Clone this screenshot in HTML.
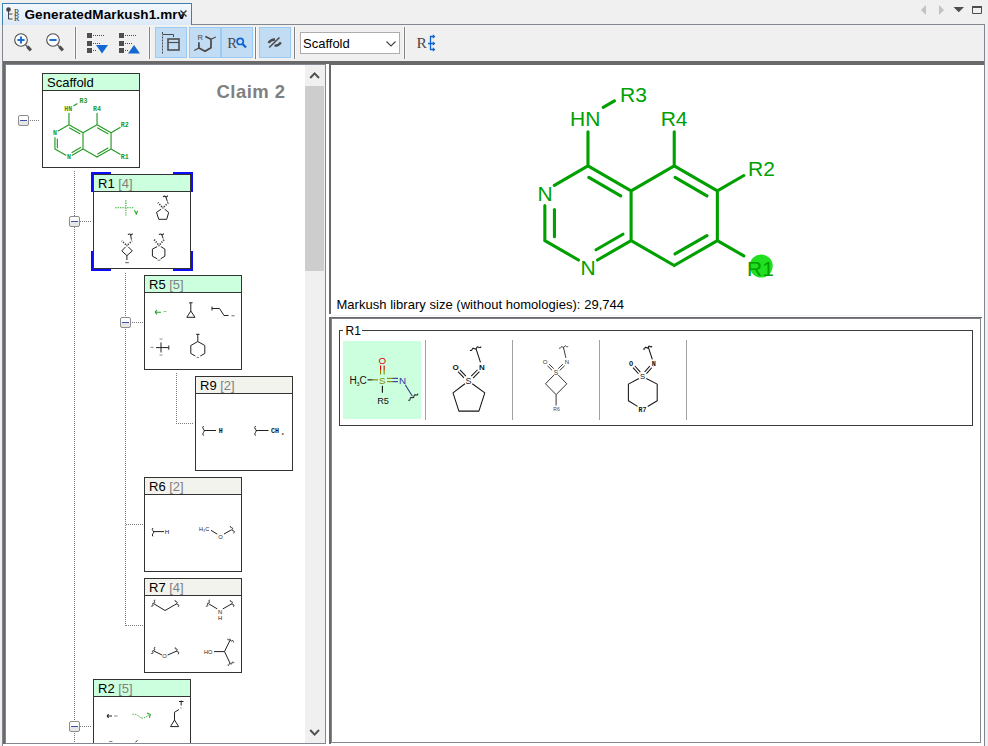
<!DOCTYPE html>
<html><head><meta charset="utf-8"><title>GeneratedMarkush1.mrv</title>
<style>
html,body{margin:0;padding:0}
body{width:988px;height:746px;background:#f0f0f0;position:relative;overflow:hidden;font-family:"Liberation Sans",sans-serif;font-size:13px;color:#000}
div,svg,span{box-sizing:border-box}
.abs{position:absolute}
.cell{position:absolute;width:98px;height:95px;border:1px solid #333;background:#fff}
.cell .hd{position:absolute;left:0;top:0;width:96px;height:17px;border-bottom:1px solid #333;padding-left:4px;line-height:17px;font-size:13px;white-space:nowrap;overflow:hidden}
.cell .hd i{font-style:normal;color:#808080}
.g{background:#ccffdd}.y{background:#f3f3ed}
.exp{position:absolute;width:11px;height:11px;border:1px solid #8c8c8c;border-radius:2px;background:linear-gradient(#fff 0%,#fbfbfb 55%,#e4e4e4 62%,#e8e8e8 100%)}
.exp b{position:absolute;left:1px;top:4px;width:7px;height:1px;background:#3c50a5}
.vd{position:absolute;width:1px;background:repeating-linear-gradient(to bottom,#7a7a7a 0 1px,transparent 1px 2px)}
.hdot{position:absolute;height:1px;background:repeating-linear-gradient(to right,#7a7a7a 0 1px,transparent 1px 2px)}
.tb{position:absolute;top:27px;width:32px;height:31px;background:#c2dcf3;border:1px solid #9acbf6}
.sep{position:absolute;top:27px;width:1px;height:32px;background:#808080;box-shadow:1px 0 #fafafa,-1px 0 #f8f8f8}
svg{position:absolute;left:0;top:0;overflow:visible}
</style></head><body>
<div style="position:absolute;left:2px;top:24px;width:983px;height:1px;background:#828790;"></div><div style="position:absolute;left:2px;top:24px;width:1px;height:722px;background:#828790;"></div><div style="position:absolute;left:984px;top:24px;width:1px;height:722px;background:#828790;"></div><div style="position:absolute;left:3px;top:61px;width:981px;height:685px;background:#fff;"></div><div style="position:absolute;left:3px;top:61px;width:981px;height:3px;background:#696969;"></div><div style="position:absolute;left:3px;top:61px;width:2px;height:683px;background:#696969;"></div><div class="abs" style="left:2px;top:3px;width:190px;height:22px;border:1px solid #3c7fb1;border-bottom:none;background:linear-gradient(#f4f8fd,#dce9f8)"></div><div class="abs" style="left:24.5px;top:6px;width:159px;height:18px;overflow:hidden;white-space:nowrap;font-weight:bold;font-size:13.5px;line-height:18px;letter-spacing:0.12px">GeneratedMarkush1.mrv</div><div class="abs" style="left:5px;top:64px;width:321px;height:680px;border:1px solid #828790;background:#fff"></div><div style="position:absolute;left:305px;top:65px;width:20px;height:678px;background:#f0f0f0;"></div><div style="position:absolute;left:305px;top:86px;width:19px;height:185px;background:#cdcdcd;"></div><div style="position:absolute;left:329px;top:64px;width:2px;height:680px;background:#696969;"></div><div style="position:absolute;left:331px;top:64px;width:653px;height:1px;background:#696969;"></div><div style="position:absolute;left:329px;top:314px;width:655px;height:3px;background:#fff;"></div><div style="position:absolute;left:331px;top:315px;width:650px;height:1px;background:#f3f3f3;"></div><div style="position:absolute;left:329px;top:317px;width:653px;height:1px;background:#696969;"></div><div class="abs" style="left:331px;top:318px;width:650px;height:425px;border:1px solid #828790;border-top:none;background:#fff"></div><div style="position:absolute;left:331px;top:318px;width:650px;height:1px;background:#7b7e85;"></div><div class="tb" style="left:155px"></div><div class="tb" style="left:189px"></div><div class="tb" style="left:221px"></div><div class="tb" style="left:259px"></div><div class="sep" style="left:75px"></div><div class="sep" style="left:149px"></div><div class="sep" style="left:255px"></div><div class="sep" style="left:294px"></div><div class="sep" style="left:404px"></div><div class="abs" style="left:300px;top:32px;width:100px;height:22px;border:1px solid #adadad;background:#fff;padding-left:2px;line-height:22px;font-size:13px">Scaffold</div><div class="abs" style="left:216.6px;top:81px;font-weight:bold;font-size:18.5px;line-height:22px;color:#808080;letter-spacing:0.42px;white-space:nowrap">Claim 2</div><div class="abs" style="left:6px;top:65px;width:299px;height:678px;overflow:hidden"><div class="abs" style="left:-6px;top:-65px;width:988px;height:900px"><div class="vd" style="left:74px;top:171px;height:576px"></div><div class="vd" style="left:125px;top:273px;height:353px"></div><div class="vd" style="left:176px;top:373px;height:51px"></div><div class="hdot" style="left:30px;top:120px;width:9px"></div><div class="hdot" style="left:80px;top:221px;width:11px"></div><div class="hdot" style="left:132px;top:322px;width:11px"></div><div class="hdot" style="left:176px;top:423px;width:17px"></div><div class="hdot" style="left:126px;top:524px;width:17px"></div><div class="hdot" style="left:126px;top:625px;width:17px"></div><div class="hdot" style="left:80px;top:726px;width:11px"></div><div class="exp" style="left:18px;top:115px"><b></b></div><div class="exp" style="left:69px;top:216px"><b></b></div><div class="exp" style="left:120px;top:317px"><b></b></div><div class="exp" style="left:69px;top:721px"><b></b></div><div class="cell" style="left:42px;top:73px"><div class="hd g">Scaffold</div></div><div class="cell" style="left:93px;top:174px"><div class="hd g">R1 <i>[4]</i></div></div><div class="cell" style="left:144px;top:275px"><div class="hd g">R5 <i>[5]</i></div></div><div class="cell" style="left:195px;top:376px"><div class="hd y">R9 <i>[2]</i></div></div><div class="cell" style="left:144px;top:477px"><div class="hd y">R6 <i>[2]</i></div></div><div class="cell" style="left:144px;top:578px"><div class="hd y">R7 <i>[4]</i></div></div><div class="cell" style="left:93px;top:679px"><div class="hd g">R2 <i>[5]</i></div></div><div style="position:absolute;left:91px;top:172px;width:20px;height:2px;background:#0c0cf6;"></div><div style="position:absolute;left:91px;top:172px;width:2px;height:20px;background:#0c0cf6;"></div><div style="position:absolute;left:173px;top:172px;width:20px;height:2px;background:#0c0cf6;"></div><div style="position:absolute;left:191px;top:172px;width:2px;height:20px;background:#0c0cf6;"></div><div style="position:absolute;left:91px;top:269px;width:20px;height:2px;background:#0c0cf6;"></div><div style="position:absolute;left:91px;top:251px;width:2px;height:20px;background:#0c0cf6;"></div><div style="position:absolute;left:173px;top:269px;width:20px;height:2px;background:#0c0cf6;"></div><div style="position:absolute;left:191px;top:251px;width:2px;height:20px;background:#0c0cf6;"></div><svg width="988" height="900" viewBox="0 0 988 900"><path d="M83 132.8L83 149M83 132.8L68.97 124.7M79.89 133.78L69.68 127.88M68.97 124.7L58.06 131M54.94 137.66L54.94 149M57.34 138.98L57.34 147.68M54.94 149L65.85 155.3M72.09 155.3L83 149M72.03 152.56L80.66 147.58M83 132.8L97.03 124.7M97.03 124.7L111.06 132.8M97.73 127.88L107.95 133.78M111.06 132.8L111.06 149M111.06 149L97.03 157.1M107.95 148.02L97.73 153.92M97.03 157.1L83 149M68.97 124.7L68.97 113.36M97.03 124.7L97.03 113.36M111.06 132.8L120.1 127.58M111.06 149L120.1 154.22M73.8 105.71L77.08 103.82" stroke="#239a23" stroke-width="1.15" fill="none" stroke-linecap="round"/><g font-family="'Liberation Mono',monospace" font-size="6.6" font-weight="bold" fill="#239a23"><text x="54.94" y="135.18" text-anchor="middle">N</text><text x="68.97" y="159.48" text-anchor="middle">N</text><text x="68.27" y="110.88" text-anchor="middle">HN</text><text x="97.03" y="110.88" text-anchor="middle">R4</text><text x="83.5" y="102.78" text-anchor="middle">R3</text><text x="124.69" y="127.08" text-anchor="middle">R2</text><text x="124.69" y="159.48" text-anchor="middle">R1</text></g><path d="M115.2 207.8h19M125.9 200.2v15.2" stroke="#22aa22" stroke-width="1.1" fill="none" stroke-dasharray="1.3 1.1"/><path d="M134.3 210.3l2 3.4M137.6 210.8l-1.6 4" stroke="#22aa22" stroke-width="1.1" fill="none" /><path d="M161.93 206.79L157.88 202.57M163.91 206.83L168.33 202.58" stroke="#3a3a3a" stroke-width="1.7" fill="none" stroke-dasharray="1.2 1.3"/><path d="M167.38 201.49L165.7 196.6" stroke="#222" stroke-width="1" fill="none" /><path d="M163.1 196.8q1.5 -1.2 2.6 -0.2t2 -1" stroke="#222" stroke-width="1.1" fill="none" /><path d="M164.7 209.2L168.7 212.4L166.7 219.3L158.8 219.3L156.5 212.4L161.1 209.2" stroke="#222" stroke-width="1" fill="none" stroke-linejoin="round"/><circle cx="162.9" cy="207.8" r="0.9" fill="#777"/><path d="M125.86 244.57L121.65 240.8M127.94 244.57L132.15 240.8" stroke="#3a3a3a" stroke-width="1.7" fill="none" stroke-dasharray="1.2 1.3"/><path d="M131.42 239.62L130.5 234.4" stroke="#222" stroke-width="1" fill="none" /><path d="M127.9 234.6q1.5 -1.2 2.6 -0.2t2 -1" stroke="#222" stroke-width="1.1" fill="none" /><path d="M128.3 246.9L132.3 250.9L126.9 255.7L121.8 250.9L125.5 246.9" stroke="#222" stroke-width="1" fill="none" stroke-linejoin="round"/><circle cx="126.9" cy="245.5" r="0.9" fill="#777"/><path d="M126.9 255.7v4.3" stroke="#222" stroke-width="1" fill="none" /><path d="M125.2 262.6h3.6" stroke="#777" stroke-width="1.2" fill="none" /><path d="M158.1 244.43L154.02 239.54M159.92 244.45L164.19 239.55" stroke="#3a3a3a" stroke-width="1.7" fill="none" stroke-dasharray="1.2 1.3"/><path d="M163.21 238.51L161.6 234.4" stroke="#222" stroke-width="1" fill="none" /><path d="M159 234.6q1.5 -1.2 2.6 -0.2t2 -1" stroke="#222" stroke-width="1.1" fill="none" /><path d="M160.8 246.6L164.9 249.1L164.9 256.2L160.6 258.8" stroke="#222" stroke-width="1" fill="none" stroke-linejoin="round"/><circle cx="159" cy="245.5" r="0.9" fill="#777"/><path d="M157.2 246.6L152.4 249.1V256.2L157.2 258.8" stroke="#222" stroke-width="1" fill="none" stroke-linejoin="round"/><path d="M157.6 260.2h2.8" stroke="#888" stroke-width="1.2" fill="none" /><path d="M155 312.2h6M155 312.2l2-2.2M155 312.2l2 2.2" stroke="#27a027" stroke-width="1.1" fill="none" /><path d="M163.5 311.5h3" stroke="#8c8" stroke-width="1" fill="none" /><path d="M190.8 303v8M190.8 311l-4 6.3h8.2zM189 302.8h3.6" stroke="#222" stroke-width="1" fill="none" stroke-linejoin="round"/><path d="M212 306.5v4M212 308.5h7.5l4.5 7h4.5" stroke="#222" stroke-width="1" fill="none" stroke-linejoin="round"/><path d="M231.5 315.8h3" stroke="#666" stroke-width="1" fill="none" /><path d="M156 347.6h12.5M161 342.5v10M168.8 345.5v4.2" stroke="#222" stroke-width="1" fill="none" /><path d="M150.5 347.3h3M159.5 339h3M159.5 355h3" stroke="#888" stroke-width="1" fill="none" /><path d="M197.8 334.5v7M196 334.3h3.6M197.8 341.5l7 4v8l-4.5 2.5M197.8 341.5l-7 4v8l4.5 2.5" stroke="#222" stroke-width="1" fill="none" stroke-linejoin="round"/><path d="M196.8 357.5h2.2" stroke="#777" stroke-width="1" fill="none" /><path d="M203.5 426q-1.6 1.6 0 3.2t0 3.2 0 3.2M204 430.5h12" stroke="#222" stroke-width="1" fill="none" /><text x="220.7" y="433.3" font-family="'Liberation Mono',monospace" font-size="6.6" font-weight="bold" fill="#111" text-anchor="middle">H</text><path d="M255.5 426q-1.6 1.6 0 3.2t0 3.2 0 3.2M256 430.5h12.5" stroke="#222" stroke-width="1" fill="none" /><text x="271" y="433.3" font-family="'Liberation Mono',monospace" font-size="6.6" font-weight="bold" fill="#111" text-anchor="start">CH</text><text x="281.5" y="434.5" font-family="'Liberation Mono',monospace" font-size="3.6" font-weight="bold" fill="#111" text-anchor="start">3</text><path d="M153 528q-1.6 1.4 0 2.8t0 2.8 0 2.8M153.5 531.6h10.5" stroke="#222" stroke-width="1" fill="none" /><text x="167" y="534.3" font-family="'Liberation Sans',sans-serif" font-size="6.2" font-weight="normal" fill="#222" text-anchor="middle">H</text><text x="199" y="531.3" font-family="'Liberation Sans',sans-serif" font-size="5.6" font-weight="normal" fill="#222" text-anchor="start">H</text><text x="203.3" y="532.3" font-family="'Liberation Sans',sans-serif" font-size="3" font-weight="normal" fill="#222" text-anchor="start">3</text><text x="205.2" y="531.3" font-family="'Liberation Sans',sans-serif" font-size="5.6" font-weight="normal" fill="#222" text-anchor="start">C</text><path d="M211 530.3l6.3 3.9M224 534l7.5-4.2" stroke="#222" stroke-width="1" fill="none" /><text x="220.5" y="539" font-family="'Liberation Sans',sans-serif" font-size="5.8" font-weight="normal" fill="#222" text-anchor="middle">O</text><path d="M230.62 525.97L230.44 526.44L230.37 526.86L230.48 527.18L230.79 527.39L231.24 527.52L231.75 527.63L232.2 527.77L232.49 528L232.58 528.32L232.5 528.75L232.31 529.22L232.14 529.69L232.08 530.1L232.21 530.41L232.53 530.62L233 530.75L233.5 530.85L233.94 531L234.21 531.23L234.29 531.57L234.19 532L234 532.48L233.83 532.94L233.79 533.34" stroke="#222" stroke-width="1" fill="none" /><path d="M153.8 603.7L165 610.5M176.8 603.7L165 610.5" stroke="#222" stroke-width="1" fill="none" /><path d="M155.26 600.09L154.78 600.19L154.4 600.34L154.21 600.59L154.21 600.95L154.37 601.38L154.57 601.85L154.71 602.28L154.7 602.62L154.49 602.87L154.1 603.01L153.61 603.11L153.14 603.21L152.78 603.37L152.6 603.63L152.62 604L152.78 604.44L152.99 604.9L153.12 605.32L153.09 605.66L152.86 605.89L152.46 606.03L151.97 606.12L151.5 606.23L151.15 606.4M175.34 600.09L175.15 600.54L175.07 600.94L175.17 601.24L175.47 601.44L175.91 601.55L176.41 601.64L176.85 601.77L177.13 601.97L177.21 602.28L177.12 602.68L176.92 603.14L176.74 603.59L176.67 603.98L176.79 604.27L177.1 604.46L177.56 604.57L178.06 604.66L178.48 604.79L178.74 605L178.81 605.32L178.7 605.73L178.5 606.19L178.32 606.64L178.27 607.02" stroke="#222" stroke-width="1" fill="none" /><path d="M208.5 603.7L217.25 608.87M232 603.7L222.78 608.92" stroke="#222" stroke-width="1" fill="none" /><path d="M209.96 600.09L209.48 600.19L209.1 600.34L208.91 600.59L208.91 600.95L209.07 601.38L209.27 601.85L209.41 602.28L209.4 602.62L209.19 602.87L208.8 603.01L208.31 603.11L207.84 603.21L207.48 603.37L207.3 603.63L207.32 604L207.48 604.44L207.69 604.9L207.82 605.32L207.79 605.66L207.56 605.89L207.16 606.03L206.67 606.12L206.2 606.23L205.85 606.4M230.54 600.09L230.35 600.54L230.27 600.94L230.37 601.24L230.67 601.44L231.11 601.55L231.61 601.64L232.05 601.77L232.33 601.97L232.41 602.28L232.32 602.68L232.12 603.14L231.94 603.59L231.87 603.98L231.99 604.27L232.3 604.46L232.76 604.57L233.26 604.66L233.68 604.79L233.94 605L234.01 605.32L233.9 605.73L233.7 606.19L233.52 606.64L233.47 607.02" stroke="#222" stroke-width="1" fill="none" /><text x="220" y="613.8" font-family="'Liberation Sans',sans-serif" font-size="5.8" font-weight="normal" fill="#222" text-anchor="middle">N</text><text x="220" y="619.5" font-family="'Liberation Sans',sans-serif" font-size="5.8" font-weight="normal" fill="#222" text-anchor="middle">H</text><path d="M153.8 651L161.92 654.91M176.8 651L167.73 655.01" stroke="#222" stroke-width="1" fill="none" /><path d="M155.26 647.39L154.78 647.49L154.4 647.64L154.21 647.89L154.21 648.25L154.37 648.68L154.57 649.15L154.71 649.58L154.7 649.92L154.49 650.17L154.1 650.31L153.61 650.41L153.14 650.51L152.78 650.67L152.6 650.93L152.62 651.3L152.78 651.74L152.99 652.2L153.12 652.62L153.09 652.96L152.86 653.19L152.46 653.33L151.97 653.42L151.5 653.53L151.15 653.7M175.34 647.39L175.15 647.84L175.07 648.24L175.17 648.54L175.47 648.74L175.91 648.85L176.41 648.94L176.85 649.07L177.13 649.27L177.21 649.58L177.12 649.98L176.92 650.44L176.74 650.89L176.67 651.28L176.79 651.57L177.1 651.76L177.56 651.87L178.06 651.96L178.48 652.09L178.74 652.3L178.81 652.62L178.7 653.03L178.5 653.49L178.32 653.94L178.27 654.32" stroke="#222" stroke-width="1" fill="none" /><text x="164.6" y="658.3" font-family="'Liberation Sans',sans-serif" font-size="5.8" font-weight="normal" fill="#222" text-anchor="middle">O</text><text x="204" y="653.8" font-family="'Liberation Sans',sans-serif" font-size="5.6" font-weight="normal" fill="#222" text-anchor="start">HO</text><path d="M214 651.6h10.5l5.6-11.5M224.5 651.6l5.6 11.7" stroke="#222" stroke-width="1" fill="none" stroke-linejoin="round"/><path d="M227.63 638.82L227.73 639.29L227.89 639.65L228.13 639.82L228.47 639.79L228.87 639.6L229.31 639.36L229.71 639.19L230.04 639.18L230.27 639.36L230.42 639.74L230.52 640.21L230.63 640.67L230.79 641.02L231.04 641.17L231.38 641.12L231.8 640.92L232.23 640.69L232.63 640.53L232.95 640.53L233.17 640.74L233.31 641.12L233.41 641.6L233.52 642.06L233.69 642.38M227.63 665.08L228.05 665.3L228.43 665.41L228.71 665.34L228.91 665.06L229.03 664.63L229.12 664.14L229.25 663.72L229.45 663.46L229.74 663.4L230.12 663.53L230.55 663.76L230.97 663.97L231.34 664.07L231.62 663.97L231.8 663.68L231.92 663.24L232.02 662.76L232.15 662.35L232.35 662.1L232.66 662.06L233.04 662.2L233.47 662.43L233.89 662.64L234.25 662.72" stroke="#222" stroke-width="1" fill="none" /><path d="M107 716h5M107 716l1.6-1.8M107 716l1.6 1.8" stroke="#222" stroke-width="1.1" fill="none" /><path d="M114 716h3.5" stroke="#888" stroke-width="1" fill="none" /><path d="M132.5 714.2q4 0 6.5 2.2t5 1.6l5-3" stroke="#27a027" stroke-width="1" fill="none" stroke-dasharray="1.3 1.2"/><path d="M147 713l3.3 1.6-1 3.3" stroke="#27a027" stroke-width="1.1" fill="none" /><path d="M181.2 700.5v5M179 701.5h4.5M179 709.5l-4.5 2.8v8M174.5 720l-4 6.6h8.2z" stroke="#222" stroke-width="1" fill="none" stroke-linejoin="round"/><path d="M180.3 708h1.4" stroke="#888" stroke-width="1.2" fill="none" /><path d="M109 741.5h3.5" stroke="#888" stroke-width="1" fill="none" /><path d="M135.5 742l2-1.6" stroke="#222" stroke-width="1" fill="none" /></svg></div></div><div class="abs" style="left:336.5px;top:297px;font-size:13px;letter-spacing:0.03px;line-height:15px;white-space:nowrap">Markush library size (without homologies): 29,744</div><div class="abs" style="left:339px;top:330px;width:634px;height:96px;border:1px solid #3c3c3c"></div><div class="abs" style="left:343px;top:323px;width:19px;height:16px;background:#fff;padding-left:2.5px;line-height:16px;font-size:12px">R1</div><div style="position:absolute;left:343px;top:341px;width:78px;height:78px;background:#ccffdd;"></div><div style="position:absolute;left:425px;top:340px;width:1px;height:80px;background:#a0a0a0;"></div><div style="position:absolute;left:512px;top:340px;width:1px;height:80px;background:#a0a0a0;"></div><div style="position:absolute;left:599px;top:340px;width:1px;height:80px;background:#a0a0a0;"></div><div style="position:absolute;left:686px;top:340px;width:1px;height:80px;background:#a0a0a0;"></div><svg width="988" height="746" viewBox="0 0 988 746"><path d="M926 5v10l-5-5z" fill="#c2c2c2"/><path d="M939 5v10l5-5z" fill="#c2c2c2"/><path d="M953.5 7h10.5l-5.25 5.3z" fill="#4d4d4d"/><path d="M972.5 7.5h9v6h-9z" fill="none" stroke="#4d4d4d" stroke-width="1"/><path d="M972 6h10v2h-10z" fill="#4d4d4d"/><circle cx="8.5" cy="9.5" r="2.3" fill="#444"/><path d="M8.5 10v9h4M8.5 14h4" stroke="#444" stroke-width="1" fill="none"/><g font-family="'Liberation Serif',serif" font-size="8" fill="#333"><text x="14" y="14.8">R</text><text x="14" y="21.4">R</text></g><path d="M180.5 10.5l6 6M186.5 10.5l-6 6" stroke="#333" stroke-width="1.4" fill="none"/><circle cx="21" cy="40" r="6.3" fill="#fdfdfd" stroke="#4f4f4f" stroke-width="1.1"/><path d="M25.4 44.6l3 3.1" stroke="#4f4f4f" stroke-width="1.3" fill="none"/><path d="M27.4 46.7l3.5 3.6" stroke="#4f4f4f" stroke-width="3.1" fill="none"/><path d="M17.4 40h7.2" stroke="#1468d2" stroke-width="1.9" fill="none"/><path d="M21 36.4v7.2" stroke="#1468d2" stroke-width="1.9" fill="none"/><circle cx="53" cy="40" r="6.3" fill="#fdfdfd" stroke="#4f4f4f" stroke-width="1.1"/><path d="M57.4 44.6l3 3.1" stroke="#4f4f4f" stroke-width="1.3" fill="none"/><path d="M59.4 46.7l3.5 3.6" stroke="#4f4f4f" stroke-width="3.1" fill="none"/><path d="M49.4 40h7.2" stroke="#1468d2" stroke-width="1.9" fill="none"/><rect x="87" y="33" width="5" height="5" fill="#4f4f4f"/><rect x="93" y="35" width="1" height="1" fill="#4f4f4f"/><rect x="95" y="35" width="1" height="1" fill="#4f4f4f"/><rect x="97" y="35" width="1" height="1" fill="#4f4f4f"/><rect x="99" y="35" width="1" height="1" fill="#4f4f4f"/><rect x="101" y="35" width="1" height="1" fill="#4f4f4f"/><rect x="103" y="35" width="1" height="1" fill="#4f4f4f"/><rect x="87" y="41" width="5" height="5" fill="#4f4f4f"/><rect x="93" y="43" width="1" height="1" fill="#4f4f4f"/><rect x="95" y="43" width="1" height="1" fill="#4f4f4f"/><rect x="97" y="43" width="1" height="1" fill="#4f4f4f"/><rect x="99" y="43" width="1" height="1" fill="#4f4f4f"/><rect x="87" y="48" width="5" height="5" fill="#4f4f4f"/><rect x="93" y="50" width="1" height="1" fill="#4f4f4f"/><rect x="95" y="50" width="1" height="1" fill="#4f4f4f"/><path d="M96 45h12l-6 8.5z" fill="#1468d2"/><rect x="119" y="33" width="5" height="5" fill="#4f4f4f"/><rect x="125" y="35" width="1" height="1" fill="#4f4f4f"/><rect x="127" y="35" width="1" height="1" fill="#4f4f4f"/><rect x="129" y="35" width="1" height="1" fill="#4f4f4f"/><rect x="131" y="35" width="1" height="1" fill="#4f4f4f"/><rect x="133" y="35" width="1" height="1" fill="#4f4f4f"/><rect x="135" y="35" width="1" height="1" fill="#4f4f4f"/><rect x="119" y="41" width="5" height="5" fill="#4f4f4f"/><rect x="125" y="43" width="1" height="1" fill="#4f4f4f"/><rect x="127" y="43" width="1" height="1" fill="#4f4f4f"/><rect x="129" y="43" width="1" height="1" fill="#4f4f4f"/><rect x="131" y="43" width="1" height="1" fill="#4f4f4f"/><rect x="119" y="48" width="5" height="5" fill="#4f4f4f"/><rect x="125" y="50" width="1" height="1" fill="#4f4f4f"/><rect x="127" y="50" width="1" height="1" fill="#4f4f4f"/><path d="M128 53.5h12l-6 -8.5z" fill="#1468d2"/><path d="M162.5 34.5h11v2.5" stroke="#4a4a4a" stroke-width="1" fill="none"/><path d="M162.5 32v3.5M162.5 36.5v18" stroke="#4a4a4a" stroke-width="1" stroke-dasharray="2 1" fill="none"/><rect x="168" y="39" width="11" height="11" fill="none" stroke="#4f4f4f" stroke-width="1.6"/><path d="M168 42.5h11" stroke="#4f4f4f" stroke-width="1.2"/><path d="M198.9 42.3v5.8l6.1 3.2 6-3.6v-8.5l-5.7-2.6" stroke="#4a4646" stroke-width="1.7" fill="none" stroke-linejoin="round"/><path d="M194.2 50.6l4.7-2.5M211 39.2l4.8-2.1" stroke="#4a4646" stroke-width="1.1" fill="none"/><text x="197.6" y="39.7" font-family="'Liberation Sans',sans-serif" font-size="7.6" fill="#4a4646">R</text><text x="227.2" y="47.8" font-family="'Liberation Serif',serif" font-size="14.6" fill="#4a4646">R</text><circle cx="240.2" cy="41.4" r="3.1" fill="none" stroke="#1064d2" stroke-width="1.7"/><path d="M242.6 44l3.4 3.5" stroke="#1064d2" stroke-width="2.3"/><path d="M268.4 42.9q2.8-3.6 6.6-3.4" stroke="#4a4a4a" stroke-width="2.3" fill="none"/><path d="M274.5 45.7q3.9 0.2 6.4-3.4" stroke="#4a4a4a" stroke-width="2.3" fill="none"/><path d="M269.2 47.5l10.3-10" stroke="#4a4a4a" stroke-width="1.5"/><path d="M386.5 41.5l4.5 4.5 4.5-4.5" stroke="#444" stroke-width="1.1" fill="none"/><text x="416.6" y="48" font-family="'Liberation Serif',serif" font-size="15.5" fill="#484848">R</text><path d="M434 36.5h-3.5v13h3.5M428 43.5h6" stroke="#1064d2" stroke-width="1.3" fill="none"/><path d="M432.8 34.2l2.6 2.3-2.6 2.3zM432.8 41.2l2.6 2.3-2.6 2.3zM432.8 47.2l2.6 2.3-2.6 2.3z" fill="#1064d2"/><path d="M310.2 78l4.4-4.6 4.4 4.6" stroke="#505050" stroke-width="2" fill="none"/><path d="M310.2 730l4.4 4.6 4.4-4.6" stroke="#505050" stroke-width="2" fill="none"/><circle cx="761.2" cy="266" r="11.5" fill="#20e020"/><path d="M631.1 190.8L631.1 240.6M631.1 190.8L587.97 165.9M620.67 195.86L588.8 177.46M587.97 165.9L554.37 185.3M544.84 205.65L544.84 240.6M554.44 209.55L554.44 236.7M544.84 240.6L578.45 260M597.5 260L631.1 240.6M596.08 249.74L622.92 234.24M631.1 190.8L674.23 165.9M674.23 165.9L717.36 190.8M675.06 177.46L706.93 195.86M717.36 190.8L717.36 240.6M717.36 240.6L674.23 265.5M706.93 235.54L675.06 253.94M674.23 265.5L631.1 240.6M587.97 165.9L587.97 131.83M674.23 165.9L674.23 131.83M717.36 190.8L743.81 175.53M717.36 240.6L743.81 255.88M603.21 107.3L614.43 100.83" stroke="#00a000" stroke-width="3.1" fill="none" stroke-linecap="round"/><g font-family="'Liberation Sans',sans-serif" font-size="21" font-weight="normal" fill="#00a000"><text x="545.1" y="200.7" text-anchor="middle">N</text><text x="588.2" y="275.4" text-anchor="middle">N</text><text x="585.15" y="125.6" text-anchor="middle">HN</text><text x="674.1" y="125.6" text-anchor="middle">R4</text><text x="633.45" y="101.5" text-anchor="middle">R3</text><text x="761.44" y="175.7" text-anchor="middle">R2</text><text x="760.48" y="275.7" text-anchor="middle">R1</text></g><text x="349.5" y="384" font-family="'Liberation Sans',sans-serif" font-size="10" font-weight="normal" fill="#111" text-anchor="start">H</text><text x="356.6" y="385.5" font-family="'Liberation Sans',sans-serif" font-size="5.5" font-weight="normal" fill="#111" text-anchor="start">3</text><text x="359.4" y="384" font-family="'Liberation Sans',sans-serif" font-size="10" font-weight="normal" fill="#111" text-anchor="start">C</text><defs><linearGradient id="g1" gradientUnits="userSpaceOnUse" x1="367" y1="0" x2="378" y2="0"><stop offset="0.35" stop-color="#111"/><stop offset="0.65" stop-color="#8a8a00"/></linearGradient><linearGradient id="g2" gradientUnits="userSpaceOnUse" x1="0" y1="365" x2="0" y2="375"><stop offset="0.4" stop-color="#e00000"/><stop offset="0.6" stop-color="#8a8a00"/></linearGradient><linearGradient id="g3" gradientUnits="userSpaceOnUse" x1="387" y1="0" x2="398" y2="0"><stop offset="0.4" stop-color="#8a8a00"/><stop offset="0.6" stop-color="#3030a0"/></linearGradient></defs><rect x="367.5" y="379.3" width="10.5" height="1.1" fill="url(#g1)"/><rect x="380" y="365.5" width="1.1" height="9" fill="url(#g2)"/><rect x="383.6" y="365.5" width="1.1" height="9" fill="url(#g2)"/><rect x="387" y="377.8" width="11" height="1.1" fill="url(#g3)"/><rect x="387" y="381.1" width="11" height="1.1" fill="url(#g3)"/><text x="382.3" y="364.4" font-family="'Liberation Sans',sans-serif" font-size="9.8" font-weight="normal" fill="#e00000" text-anchor="middle">O</text><text x="382.3" y="383.9" font-family="'Liberation Sans',sans-serif" font-size="9.8" font-weight="normal" fill="#8a8a00" text-anchor="middle">S</text><text x="402.6" y="383.9" font-family="'Liberation Sans',sans-serif" font-size="9.8" font-weight="normal" fill="#3030a0" text-anchor="middle">N</text><path d="M382.4 385.8v7" stroke="#111" stroke-width="1.1" fill="none" /><text x="383.1" y="404.3" font-family="'Liberation Sans',sans-serif" font-size="9.2" font-weight="normal" fill="#111" text-anchor="middle">R5</text><path d="M405.2 384.8l7.2 11.5" stroke="#3a3a8a" stroke-width="1.1" fill="none" /><path d="M408.2 400.2L408.88 400.33L409.44 400.29L409.82 399.98L410.03 399.43L410.14 398.74L410.28 398.08L410.55 397.62L411.01 397.43L411.63 397.47L412.32 397.62L412.96 397.7L413.45 397.56L413.76 397.15L413.92 396.52L414.03 395.82L414.21 395.23L414.55 394.87L415.08 394.78L415.74 394.89L416.43 395.03L417.02 395.03L417.44 394.79L417.68 394.28L417.8 393.6" stroke="#222" stroke-width="1.05" fill="none" /><text x="468.5" y="384.04" font-family="'Liberation Sans',sans-serif" font-size="9" font-weight="normal" fill="#151515" text-anchor="middle">S</text><text x="455.6" y="369.98" font-family="'Liberation Sans',sans-serif" font-size="8" font-weight="bold" fill="#151515" text-anchor="middle">O</text><text x="482" y="369.98" font-family="'Liberation Sans',sans-serif" font-size="8" font-weight="bold" fill="#151515" text-anchor="middle">N</text><path d="M465.88 376.12L459.97 369.85M463.99 377.91L458.08 371.63M473.08 378.01L479.42 371.57M471.22 376.18L477.56 369.75M480.46 362.34L476 348.6" stroke="#151515" stroke-width="1.05" fill="none" /><path d="M469.9 350.1L470.5 350.39L471.04 350.5L471.5 350.32L471.86 349.87L472.18 349.28L472.52 348.72L472.91 348.37L473.4 348.31L473.98 348.51L474.58 348.83L475.17 349.06L475.68 349.07L476.09 348.77L476.43 348.24L476.75 347.64L477.1 347.15L477.54 346.91L478.07 346.97L478.66 347.24L479.26 347.54L479.82 347.7L480.29 347.58L480.67 347.18L481 346.6" stroke="#151515" stroke-width="1.05" fill="none" /><path d="M472.31 383.72L484.8 392.9L478.9 411.1L458.9 411.1L453 392.9L464.94 383.79" stroke="#151515" stroke-width="1.05" fill="none" stroke-linejoin="round"/><text x="555.9" y="374.78" font-family="'Liberation Sans',sans-serif" font-size="6.6" font-weight="normal" fill="#333" text-anchor="middle">S</text><text x="545.2" y="364.2" font-family="'Liberation Sans',sans-serif" font-size="6.1" font-weight="normal" fill="#333" text-anchor="middle">O</text><text x="566.9" y="364.2" font-family="'Liberation Sans',sans-serif" font-size="6.1" font-weight="normal" fill="#333" text-anchor="middle">N</text><path d="M553.69 368.65L549.01 364.1M552.09 370.3L547.41 365.75M559.74 370.35L564.64 365.72M558.16 368.68L563.06 364.05M565.93 357.91L563.3 346.8" stroke="#333" stroke-width="0.95" fill="none" /><path d="M559 347.8L559.46 348.17L559.89 348.36L560.26 348.25L560.57 347.87L560.86 347.33L561.15 346.83L561.48 346.55L561.87 346.56L562.32 346.84L562.79 347.24L563.24 347.56L563.65 347.64L563.99 347.41L564.29 346.94L564.57 346.39L564.87 345.96L565.23 345.8L565.65 345.93L566.11 346.28L566.57 346.67L567.01 346.9L567.39 346.86L567.71 346.52L568 346" stroke="#333" stroke-width="0.95" fill="none" /><path d="M558.33 375.09L566.8 383.8L556.1 394.7L545.5 383.8L553.88 375.1M556.1 394.7V405.5" stroke="#2a2a2a" stroke-width="0.95" fill="none" stroke-linejoin="round"/><text x="556.5" y="411.3" font-family="'Liberation Sans',sans-serif" font-size="5" font-weight="normal" fill="#444" text-anchor="middle">R6</text><text x="642.5" y="379.04" font-family="'Liberation Sans',sans-serif" font-size="7.6" font-weight="normal" fill="#111" text-anchor="middle">S</text><text x="631" y="366.05" font-family="'Liberation Mono',monospace" font-size="6.8" font-weight="bold" fill="#111" text-anchor="middle">O</text><text x="653.7" y="366.05" font-family="'Liberation Mono',monospace" font-size="6.8" font-weight="bold" fill="#111" text-anchor="middle">N</text><path d="M640.34 372.05L634.88 366.02M638.49 373.73L633.03 367.7M646.48 373.68L651.73 367.73M644.61 372.02L649.85 366.07M652.33 359.42L648.3 347.1" stroke="#111" stroke-width="1.05" fill="none" /><path d="M643.1 348.8L643.61 349.12L644.05 349.26L644.41 349.11L644.68 348.69L644.9 348.12L645.14 347.59L645.44 347.27L645.84 347.25L646.31 347.48L646.83 347.82L647.31 348.08L647.73 348.11L648.05 347.85L648.29 347.35L648.51 346.78L648.77 346.31L649.11 346.11L649.54 346.19L650.04 346.49L650.55 346.82L651.01 347.01L651.39 346.92L651.67 346.55L651.9 346" stroke="#111" stroke-width="1.05" fill="none" /><path d="M646.33 378.44L657.2 384.1L657.2 400.7L647.72 406.48M637.52 406.41L628.4 400.7L628.4 384.1L638.9 378.48" stroke="#151515" stroke-width="1.05" fill="none" stroke-linejoin="round"/><text x="642.5" y="411.7" font-family="'Liberation Mono',monospace" font-size="6.6" font-weight="bold" fill="#111" text-anchor="middle">R7</text></svg></body></html>
